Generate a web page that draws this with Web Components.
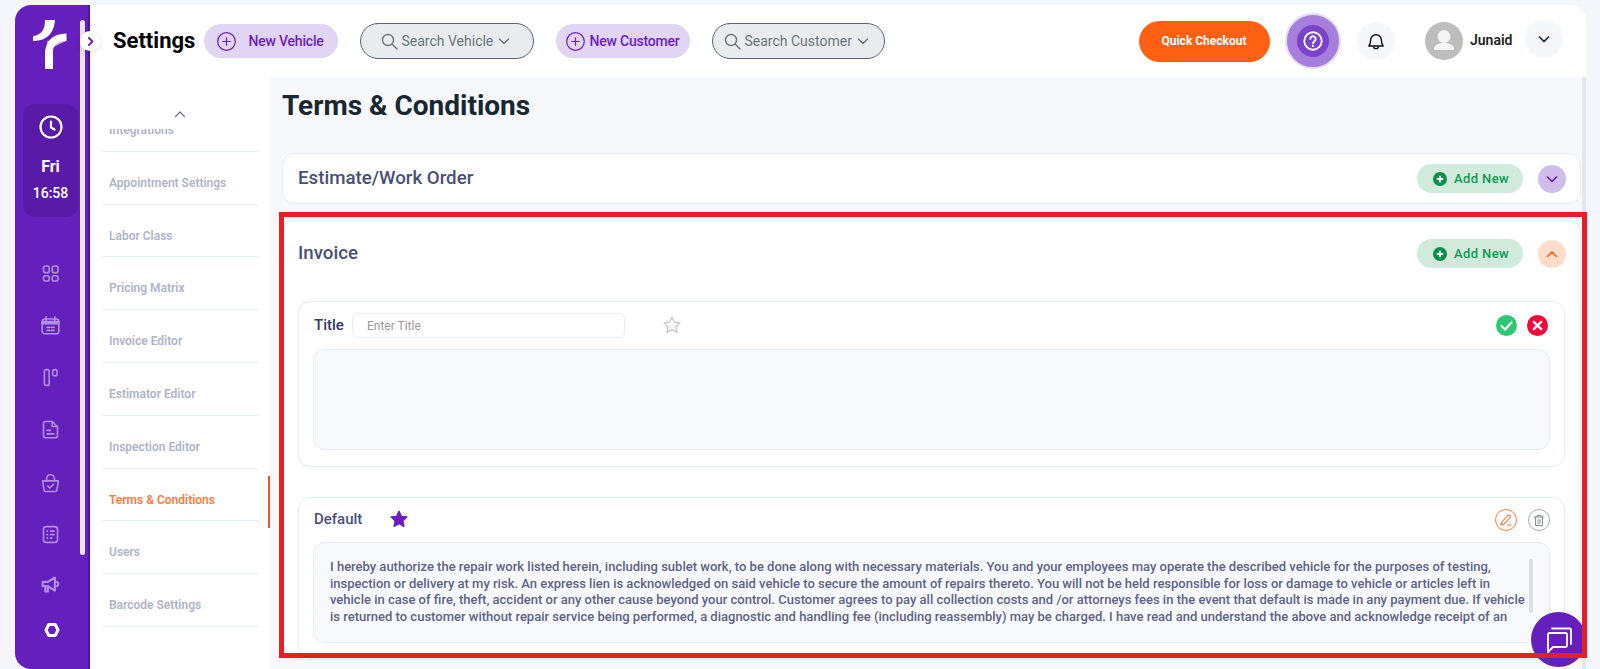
<!DOCTYPE html>
<html lang="en">
<head>
<meta charset="utf-8">
<title>Terms & Conditions</title>
<style>
    html, body { margin: 0; height: 100%; overflow: hidden; }
    body { background: #f4f6fb; font-family: Roboto, "Liberation Sans", sans-serif; }
    .shell { display: flex; height: 669px; padding: 5px 14px 0 15px; box-sizing: border-box; position: relative; }
    .main { flex: 1; display: flex; flex-direction: column; min-width: 0; }
    .below { flex: 1; display: flex; min-height: 0; }
</style>
</head>
<body>
<div class="shell">
    <app-sidebar></app-sidebar>
    <div class="main">
        <top-bar></top-bar>
        <div class="below">
            <settings-nav>
                <settings-link>Integrations</settings-link>
                <settings-link>Appointment Settings</settings-link>
                <settings-link>Labor Class</settings-link>
                <settings-link>Pricing Matrix</settings-link>
                <settings-link>Invoice Editor</settings-link>
                <settings-link>Estimator Editor</settings-link>
                <settings-link>Inspection Editor</settings-link>
                <settings-link active>Terms &amp; Conditions</settings-link>
                <settings-link>Users</settings-link>
                <settings-link>Barcode Settings</settings-link>
            </settings-nav>
            <terms-page heading="Terms &amp; Conditions">
                <terms-card heading="Estimate/Work Order"></terms-card>
                <terms-card heading="Invoice" open>
                    <term-editor></term-editor>
                    <term-item heading="Default">I hereby authorize the repair work listed herein, including sublet work, to be done along with necessary materials. You and your employees may operate the described vehicle for the purposes of testing, inspection or delivery at my risk. An express lien is acknowledged on said vehicle to secure the amount of repairs thereto. You will not be held responsible for loss or damage to vehicle or articles left in vehicle in case of fire, theft, accident or any other cause beyond your control. Customer agrees to pay all collection costs and /or attorneys fees in the event that default is made in any payment due. If vehicle is returned to customer without repair service being performed, a diagnostic and handling fee (including reassembly) may be charged. I have read and understand the above and acknowledge receipt of an</term-item>
                </terms-card>
            </terms-page>
        </div>
    </div>
    <chat-fab></chat-fab>
    <red-mark></red-mark>
</div>

<script>
const chevron = (dir, color, size = 14, width = 1.8) => `<svg width="${size}" height="${size}" viewBox="0 0 14 14" fill="none" stroke="${color}" stroke-width="${width}" stroke-linecap="round" stroke-linejoin="round"><path d="${dir === 'up' ? 'M2.5 9.5 7 5l4.5 4.5' : dir === 'right' ? 'M5 2.5 9.5 7 5 11.5' : 'M2.5 5 7 9.5 11.5 5'}"/></svg>`
const starPoints = '12 2.6 14.9 8.7 21.6 9.5 16.7 14.1 18 20.8 12 17.5 6 20.8 7.3 14.1 2.4 9.5 9.1 8.7'

class AppSidebar extends HTMLElement {
    constructor() {
        super()
        this.attachShadow({ mode: 'open' })
        const c = '#b38fe2'
        const icons = [
            [0, `<rect x="4" y="3.5" width="6.5" height="7.5" rx="2"/><rect x="14" y="3.5" width="6.5" height="7.5" rx="2"/><rect x="4" y="14.5" width="6.5" height="6" rx="2"/><rect x="14" y="14.5" width="6.5" height="6" rx="2"/>`],
            [0, `<rect x="2.5" y="4.5" width="19" height="17" rx="3"/><path d="M2.5 7.5h19V10h-19z" fill="${c}"/><path d="M7 2v4M17 2v4"/><path d="M8 14h3M13 14h3M8 17.5h3M13 17.5h3" stroke-width="2"/>`],
            [0, `<rect x="5" y="3" width="5.5" height="18" rx="2"/><rect x="14.5" y="3" width="5" height="7" rx="2"/>`],
            [0, `<path d="M6 2.8h8l6 6V19a2.5 2.5 0 0 1-2.5 2.5h-11A2.5 2.5 0 0 1 4 19V5a2.2 2.2 0 0 1 2-2.2z"/><path d="M14 3v5.5h6M8 13h4M8 17h8"/>`],
            [2, `<path d="M3 9h18l-1.6 10.5a2 2 0 0 1-2 1.7H6.6a2 2 0 0 1-2-1.7z"/><path d="M7.5 9V6.5a4.5 4.5 0 0 1 9 0V9M9 15l2.2 2.2L15.5 13"/>`],
            [-1, `<rect x="4" y="3" width="16" height="18" rx="3"/><path d="M8 8h.5M8 12h.5M8 16h.5M12 8h4M12 12h4M12 16h1.5" stroke-width="2"/>`],
            [-2, `<path d="M3 9h6l8-5v15l-8-5H3z" stroke-width="2.4"/><path d="M6 14v6h3v-6M19.5 9c1.6 1 1.6 4 0 5" stroke-width="2.4"/>`],
        ].map(([m, p]) => `<div class="icon" style="margin-top:${m}px"><svg width="21" height="21" viewBox="0 0 24 24" fill="none" stroke="${c}" stroke-width="1.8" stroke-linecap="round" stroke-linejoin="round">${p}</svg></div>`).join('')
        this.shadowRoot.innerHTML = `
            <style>
                :host {
                    display: block;
                    width: 75px;
                    flex: none;
                    height: 100%;
                    box-sizing: border-box;
                    background: #651fbd;
                    border-right: 2px solid #4f12a8;
                    border-radius: 16px 0 0 16px;
                    position: relative;
                    color: #fff;
                }
                .logo { display: block; margin: 15px 0 0 17px; }
                .clock {
                    width: 55px;
                    height: 113px;
                    margin: 34px 0 0 8px;
                    box-sizing: border-box;
                    padding-top: 11px;
                    border-radius: 12px;
                    background: #5a1aa8;
                    display: flex;
                    flex-direction: column;
                    align-items: center;
                }
                .day { font-size: 16px; font-weight: 700; line-height: 20px; margin-top: 18px; }
                .time { font-size: 14px; font-weight: 500; line-height: 18px; margin-top: 7px; }
                .icons { margin: 30px 0 0 0; width: 70px; }
                .icon { height: 52px; display: flex; align-items: center; justify-content: center; }
                .gear { height: 40px; margin-top: 0; padding-left: 3px; }
                .bar {
                    position: absolute;
                    left: 65px;
                    top: 15px;
                    width: 5px;
                    height: 535px;
                    border-radius: 3px;
                    background: #e7e7e7;
                }
                .expand {
                    position: absolute;
                    left: 65px;
                    top: 26px;
                    width: 20px;
                    height: 20px;
                    border-radius: 50%;
                    background: #fff;
                    box-shadow: 0 1px 6px rgba(0,0,0,0.12);
                    display: flex;
                    align-items: center;
                    justify-content: center;
                    z-index: 3;
                }
            </style>
            <svg class="logo" width="36" height="50" viewBox="0 0 36 50">
                <path d="M15 21 C22 20 32 18 34 16 L34 21 C28 24 22 27 16 29z" fill="#b9a3d9"/>
                <path d="M1 16 C10 15 13 9 13 0 L23 0 C22 12 16 21 1 21z" fill="#fff"/>
                <path d="M34.5 13.5 L34.5 21 C27 21 21 25 21 31 L21 49 L13 49 L13 34 C13 22 20 13.5 34.5 13.5z" fill="#fff"/>
            </svg>
            <div class="clock">
                <svg width="24" height="24" viewBox="0 0 24 24" fill="none" stroke="#fff" stroke-width="2.2" stroke-linecap="round" stroke-linejoin="round"><circle cx="12" cy="12" r="10.5"/><path d="M12 6.5V12.5l3.5 2"/></svg>
                <div class="day">Fri</div>
                <div class="time">16:58</div>
            </div>
            <div class="icons">
                ${icons}
                <div class="icon gear"><svg width="16" height="16" viewBox="0 0 16 16"><path fill="none" stroke="#fff" stroke-width="3" stroke-linejoin="round" d="M4.8 2.5h6.4L14 8l-2.8 5.5H4.800L2 8z"/></svg></div>
            </div>
            <div class="bar"></div>
            <div class="expand">${chevron('right', '#651fbd', 11, 2.4)}</div>
        `
    }
}

class TopBar extends HTMLElement {
    constructor() {
        super()
        this.attachShadow({ mode: 'open' })
        this.shadowRoot.innerHTML = `
            <style>
                :host {
                    display: flex;
                    align-items: center;
                    height: 72px;
                    flex: none;
                    box-sizing: border-box;
                    padding: 0 23px;
                    background: #fff;
                    border-radius: 0 16px 0 0;
                }
                h1 { margin: 0 6px 0 0; width: 84.5px; font-size: 22px; font-weight: 700; color: #000; white-space: nowrap; line-height: 72px; }
                .spacer { flex: 1; }
                .checkout {
                    width: 131px;
                    height: 41px;
                    border-radius: 21px;
                    background: #ff6014;
                    color: #fff;
                    font-size: 12px;
                    font-weight: 700;
                    display: flex;
                    align-items: center;
                    justify-content: center;
                }
                .help {
                    width: 56px;
                    height: 56px;
                    margin: 0 15.5px;
                    box-sizing: border-box;
                    border-radius: 50%;
                    border: 2.5px solid #e6dcf5;
                    background: #a67fdd;
                    display: flex;
                    align-items: center;
                    justify-content: center;
                }
                .help span {
                    width: 32px;
                    height: 32px;
                    border-radius: 50%;
                    background: #7c42c9;
                    display: flex;
                    align-items: center;
                    justify-content: center;
                }
                .round {
                    width: 38px;
                    height: 38px;
                    border-radius: 50%;
                    background: #f5f7fb;
                    display: flex;
                    align-items: center;
                    justify-content: center;
                    flex: none;
                }
                .bell { margin: 0 30.5px 0 0; }
                .avatar { background: #bdbdbd; overflow: hidden; }
                .name { width: 55px; margin-left: 7px; font-size: 14px; font-weight: 600; color: #222; position: relative; top: -1px; }
                .more { position: relative; top: -2px; }
            </style>
            <h1>Settings</h1>
            <bar-pill label="New Vehicle" width="134" icon-gap="13" pad="13"></bar-pill>
            <bar-search label="Search Vehicle" width="174" pad="20"></bar-search>
            <bar-pill label="New Customer" width="134" icon-gap="5" pad="10"></bar-pill>
            <bar-search label="Search Customer" width="173" pad="11"></bar-search>
            <div class="spacer"></div>
            <div class="checkout">Quick Checkout</div>
            <div class="help"><span><svg width="20" height="20" viewBox="0 0 24 24" fill="none" stroke="#fff" stroke-width="2.2" stroke-linecap="round"><circle cx="12" cy="12" r="10.5"/><path d="M8.8 9.500a3.200 3.200 0 1 1 5 2.700c-1.200.8-1.800 1.300-1.800 2.500"/><path d="M12 17.800v.1" stroke-width="2.6"/></svg></span></div>
            <div class="round bell"><svg width="18" height="20" viewBox="0 0 20 22" fill="none" stroke="#111" stroke-width="1.6" stroke-linejoin="round" stroke-linecap="round"><path d="M2 16.500c1.500-1.500 2-3 2-6.500a6 6 0 0 1 12 0c0 3.500.5 5 2 6.500z"/><path d="M7.500 17a2.500 2.500 0 0 0 5 0"/></svg></div>
            <div class="round avatar"><svg width="38" height="38" viewBox="0 0 38 38" fill="#f4f4f4"><circle cx="19" cy="14.500" r="6.500"/><path d="M9 28v-1.500c0-4 6-5.500 10-5.500s10 1.500 10 5.500V28z"/></svg></div>
            <div class="name">Junaid</div>
            <div class="round more">${chevron('down', '#1c2340', 14, 1.7)}</div>
        `
    }
}

class BarPill extends HTMLElement {
    constructor() {
        super()
        this.attachShadow({ mode: 'open' })
    }

    connectedCallback() {
        const pad = this.getAttribute('pad')
        const gap = this.getAttribute('icon-gap')
        this.shadowRoot.innerHTML = `
            <style>
                :host {
                    display: flex;
                    align-items: center;
                    width: ${this.getAttribute('width')}px;
                    height: 34px;
                    flex: none;
                    box-sizing: border-box;
                    padding-left: ${pad}px;
                    gap: ${gap}px;
                    border-radius: 17px;
                    background: #e2d4f3;
                    color: #6a1fc2;
                    font-size: 14px;
                    font-weight: 500;
                    letter-spacing: -0.2px;
                    white-space: nowrap;
                }
                svg { flex: none; }
            </style>
            <svg width="19" height="19" viewBox="0 0 19 19" fill="none" stroke="#6a1fc2" stroke-width="1.2" stroke-linecap="round"><circle cx="9.5" cy="9.5" r="8.8"/><path d="M9.5 5.8v7.4M5.8 9.5h7.4"/></svg>
            <span>${this.getAttribute('label')}</span>
        `
    }
}

class BarSearch extends HTMLElement {
    constructor() {
        super()
        this.attachShadow({ mode: 'open' })
    }

    connectedCallback() {
        this.shadowRoot.innerHTML = `
            <style>
                :host {
                    display: flex;
                    align-items: center;
                    width: ${this.getAttribute('width')}px;
                    height: 36px;
                    flex: none;
                    box-sizing: border-box;
                    margin: 0 22px;
                    padding-left: ${this.getAttribute('pad')}px;
                    gap: 4px;
                    border: 1px solid #5c607c;
                    border-radius: 18px;
                    background: #e9ecef;
                    color: #6c757d;
                    font-size: 14px;
                    white-space: nowrap;
                }
                svg { flex: none; }
            </style>
            <svg width="17" height="17" viewBox="0 0 17 17" fill="none" stroke="#6c757d" stroke-width="1.4" stroke-linecap="round"><circle cx="7" cy="7" r="5.5"/><path d="M11 11l5 5"/></svg>
            <span>${this.getAttribute('label')}</span>
            ${chevron('down', '#6c757d', 14, 1.5)}
        `
    }
}

class SettingsNav extends HTMLElement {
    constructor() {
        super()
        this.attachShadow({ mode: 'open' })
        this.shadowRoot.innerHTML = `
            <style>
                :host {
                    display: flex;
                    flex-direction: column;
                    width: 180px;
                    flex: none;
                    background: #fff;
                    overflow: hidden;
                }
                .up { height: 52px; flex: none; box-sizing: border-box; padding-top: 30px; text-align: center; line-height: 0; }
                .list { flex: 1; overflow: hidden; padding: 0 11px 0 12px; }
                .inner { margin-top: -30px; }
            </style>
            <div class="up">${chevron('up', '#6f7390', 14, 1.3)}</div>
            <div class="list"><div class="inner"><slot></slot></div></div>
        `
    }
}

class SettingsLink extends HTMLElement {
    constructor() {
        super()
        this.attachShadow({ mode: 'open' })
        this.shadowRoot.innerHTML = `
            <style>
                :host {
                    display: block;
                    position: relative;
                    height: 52.8px;
                    box-sizing: border-box;
                    padding: 24px 0 0 7px;
                    border-bottom: 1px solid #e9edf6;
                    color: #b0b3c9;
                    font-size: 12px;
                    font-weight: 600;
                    line-height: 15px;
                    white-space: nowrap;
                }
                :host([active]) { color: #ff7a3d; }
                :host([active])::after {
                    content: '';
                    position: absolute;
                    right: -11px;
                    top: 7px;
                    width: 2px;
                    height: 52px;
                    background: #f0512e;
                }
            </style>
            <slot></slot>
        `
    }
}

class TermsPage extends HTMLElement {
    constructor() {
        super()
        this.attachShadow({ mode: 'open' })
    }

    connectedCallback() {
        this.shadowRoot.innerHTML = `
            <style>
                :host {
                    display: flex;
                    flex: 1;
                    min-width: 0;
                    background: #f6f8fc;
                    overflow: hidden;
                }
                .scroll { flex: 1; min-width: 0; padding: 12px 1px 0 12px; overflow: hidden; }
                .thumb { width: 4px; flex: none; background: #e6e6e6; }
                h2 { margin: 0 0 30px; font-size: 28px; font-weight: 700; line-height: 34px; color: #1a2730; }
                .cards { display: flex; flex-direction: column; gap: 16px; }
            </style>
            <div class="scroll">
                <h2>${this.getAttribute('heading').replace('&', '&amp;')}</h2>
                <div class="cards"><slot></slot></div>
            </div>
            <div class="thumb"></div>
        `
    }
}

class TermsCard extends HTMLElement {
    constructor() {
        super()
        this.attachShadow({ mode: 'open' })
    }

    connectedCallback() {
        const open = this.hasAttribute('open')
        this.shadowRoot.innerHTML = `
            <style>
                :host {
                    display: block;
                    box-sizing: border-box;
                    padding: ${open ? '18px 15px 0' : '10px 15px'};
                    background: #fff;
                    border: 1px solid #e3ebf8;
                    border-radius: 12px;
                }
                .head { display: flex; align-items: center; height: 29px; margin-right: -1px; }
                h3 { margin: -2px 0 0; flex: 1; font-size: 18.7px; font-weight: 500; color: #4a4f78; }
                .add {
                    width: 106px;
                    height: 29px;
                    box-sizing: border-box;
                    padding-left: 2px;
                    border-radius: 15px;
                    background: #d0ebdc;
                    color: #0f9a52;
                    font-size: 13px;
                    font-weight: 500;
                    letter-spacing: 0.4px;
                    display: flex;
                    align-items: center;
                    justify-content: center;
                    gap: 7px;
                }
                .toggle {
                    width: 28px;
                    height: 28px;
                    margin-left: 15px;
                    border-radius: 50%;
                    display: flex;
                    align-items: center;
                    justify-content: center;
                    background: ${open ? '#ffdccb' : '#d0bdec'};
                }
                .body { display: flex; flex-direction: column; gap: 30px; margin-top: 33px; }
            </style>
            <div class="head">
                <h3>${this.getAttribute('heading')}</h3>
                <div class="add"><svg width="14" height="14" viewBox="0 0 14 14"><circle cx="7" cy="7" r="7" fill="#0b8f49"/><path d="M7 3.8v6.400M3.800 7h6.400" stroke="#fff" stroke-width="1.8"/></svg>Add New</div>
                <div class="toggle">${open ? chevron('up', '#ff6014', 14, 1.5) : chevron('down', '#5a14b8', 14, 1.5)}</div>
            </div>
            ${open ? '<div class="body"><slot></slot></div>' : ''}
        `
    }
}

class TermEditor extends HTMLElement {
    constructor() {
        super()
        this.attachShadow({ mode: 'open' })
        this.shadowRoot.innerHTML = `
            <style>
                :host {
                    display: block;
                    box-sizing: border-box;
                    height: 166px;
                    padding: 11px 14px 0 14px;
                    border: 1px solid #e3ebf8;
                    border-radius: 12px;
                }
                .row { display: flex; align-items: center; height: 25px; padding-left: 1px; }
                label { width: 38px; margin-bottom: 2px; font-size: 15px; font-weight: 500; color: #2f3a6e; }
                input {
                    width: 273px;
                    height: 25px;
                    box-sizing: border-box;
                    padding: 0 14px;
                    border: 1px solid #e6edf9;
                    border-radius: 6px;
                    outline: none;
                    font: 12px Roboto, "Liberation Sans", sans-serif;
                }
                input::placeholder { color: #9a9a9a; opacity: 1; }
                .star { margin: 0 0 2px 37px; }
                .acts { margin-left: auto; display: flex; gap: 10px; padding-right: 2px; }
                .area {
                    height: 101px;
                    margin-top: 11px;
                    box-sizing: border-box;
                    border: 1px solid #e3ebf8;
                    border-radius: 12px;
                    background: #f7f9fd;
                }
            </style>
            <div class="row">
                <label>Title</label>
                <input placeholder="Enter Title">
                <svg class="star" width="20" height="20" viewBox="0 0 24 24" fill="none" stroke="#c4c4c8" stroke-width="1.5" stroke-linejoin="round"><polygon points="${starPoints}"/></svg>
                <div class="acts">
                    <svg width="21" height="21" viewBox="0 0 21 21"><circle cx="10.5" cy="10.5" r="10.5" fill="#2fc774"/><path d="M5.5 11l3.5 3.5 6.5-7" fill="none" stroke="#fff" stroke-width="2.2" stroke-linecap="round" stroke-linejoin="round"/></svg>
                    <svg width="21" height="21" viewBox="0 0 21 21"><circle cx="10.5" cy="10.5" r="10.5" fill="#f5053c"/><path d="M6.8 6.8l7.4 7.400M14.200 6.800l-7.400 7.400" fill="none" stroke="#fff" stroke-width="2.4" stroke-linecap="round"/></svg>
                </div>
            </div>
            <div class="area"></div>
        `
    }
}

class TermItem extends HTMLElement {
    constructor() {
        super()
        this.attachShadow({ mode: 'open' })
    }

    connectedCallback() {
        this.shadowRoot.innerHTML = `
            <style>
                :host {
                    display: block;
                    box-sizing: border-box;
                    padding: 11px 14px 15px 14px;
                    border: 1px solid #e3ebf8;
                    border-radius: 12px;
                }
                .row { display: flex; align-items: center; height: 22px; padding-left: 1px; }
                .name { width: 75px; margin-bottom: 2px; font-size: 15px; font-weight: 500; color: #4a4f78; }
                .star { margin-bottom: 2px; }
                .acts { margin-left: auto; display: flex; gap: 11px; }
                .btn {
                    width: 22px;
                    height: 22px;
                    box-sizing: border-box;
                    border-radius: 50%;
                    display: flex;
                    align-items: center;
                    justify-content: center;
                }
                .edit { border: 1px solid #ff7a3d; }
                .trash { border: 1px solid #a9aeb6; }
                .box {
                    position: relative;
                    height: 101px;
                    margin-top: 11px;
                    box-sizing: border-box;
                    padding: 16px 22px 0 16px;
                    border: 1px solid #e3ebf8;
                    border-radius: 12px;
                    background: #f7f9fd;
                }
                .text {
                    height: 67px;
                    overflow: hidden;
                    font-size: 13px;
                    font-weight: 500;
                    line-height: 16.7px;
                    color: #5e6385;
                }
                .bar {
                    position: absolute;
                    right: 16px;
                    top: 16px;
                    width: 4px;
                    height: 54px;
                    background: #dedfe2;
                    border-radius: 2px;
                }
            </style>
            <div class="row">
                <div class="name">${this.getAttribute('heading')}</div>
                <svg class="star" width="20" height="20" viewBox="0 0 24 24" fill="#6a1fc2" stroke="#6a1fc2" stroke-width="1.5" stroke-linejoin="round"><polygon points="${starPoints}"/></svg>
                <div class="acts">
                    <div class="btn edit"><svg width="14" height="14" viewBox="0 0 14 14" fill="none" stroke="#ff6a2b" stroke-width="1.1" stroke-linecap="round" stroke-linejoin="round"><path d="M2 12l.8-3 6-6.500c.7-.7 1.600-.7 2.200-.1.600.6.600 1.500 0 2.100L5 11z"/><path d="M8.500 12H12"/></svg></div>
                    <div class="btn trash"><svg width="12" height="13" viewBox="0 0 12 13" fill="none" stroke="#8b9098" stroke-width="1" stroke-linecap="round" stroke-linejoin="round"><path d="M1 3h10M4 3V1.500h4V3M2.500 3v8.500h7V3M5 5.500v4M7 5.500v4"/></svg></div>
                </div>
            </div>
            <div class="box">
                <div class="text"><slot></slot></div>
                <div class="bar"></div>
            </div>
        `
    }
}

class ChatFab extends HTMLElement {
    constructor() {
        super()
        this.attachShadow({ mode: 'open' })
        this.shadowRoot.innerHTML = `
            <style>
                :host {
                    position: absolute;
                    left: 1531px;
                    top: 612px;
                    width: 55px;
                    height: 55px;
                    border-radius: 50%;
                    background: #651fbd;
                    display: flex;
                    align-items: center;
                    justify-content: center;
                    z-index: 4;
                }
            </style>
            <svg width="28" height="27" viewBox="0 0 28 27" fill="none" stroke="#fff" stroke-width="1.8" stroke-linejoin="round" stroke-linecap="round"><path d="M4.500 7H20.500a1.500 1.500 0 0 1 1.500 1.500V19.500a1.500 1.500 0 0 1-1.500 1.500H8l-5 5V8.500A1.500 1.500 0 0 1 4.500 7z"/><path d="M7 2.500h17.500a1.500 1.500 0 0 1 1.500 1.500v14"/></svg>
        `
    }
}

class RedMark extends HTMLElement {
    constructor() {
        super()
        this.attachShadow({ mode: 'open' })
        this.shadowRoot.innerHTML = `
            <style>
                :host {
                    position: absolute;
                    left: 279px;
                    top: 212px;
                    width: 1308px;
                    height: 446px;
                    box-sizing: border-box;
                    border: 5px solid #ed1c24;
                    pointer-events: none;
                    z-index: 5;
                }
            </style>
        `
    }
}

customElements.define('app-sidebar', AppSidebar)
customElements.define('top-bar', TopBar)
customElements.define('bar-pill', BarPill)
customElements.define('bar-search', BarSearch)
customElements.define('settings-nav', SettingsNav)
customElements.define('settings-link', SettingsLink)
customElements.define('terms-page', TermsPage)
customElements.define('terms-card', TermsCard)
customElements.define('term-editor', TermEditor)
customElements.define('term-item', TermItem)
customElements.define('chat-fab', ChatFab)
customElements.define('red-mark', RedMark)
</script>
</body>
</html>
